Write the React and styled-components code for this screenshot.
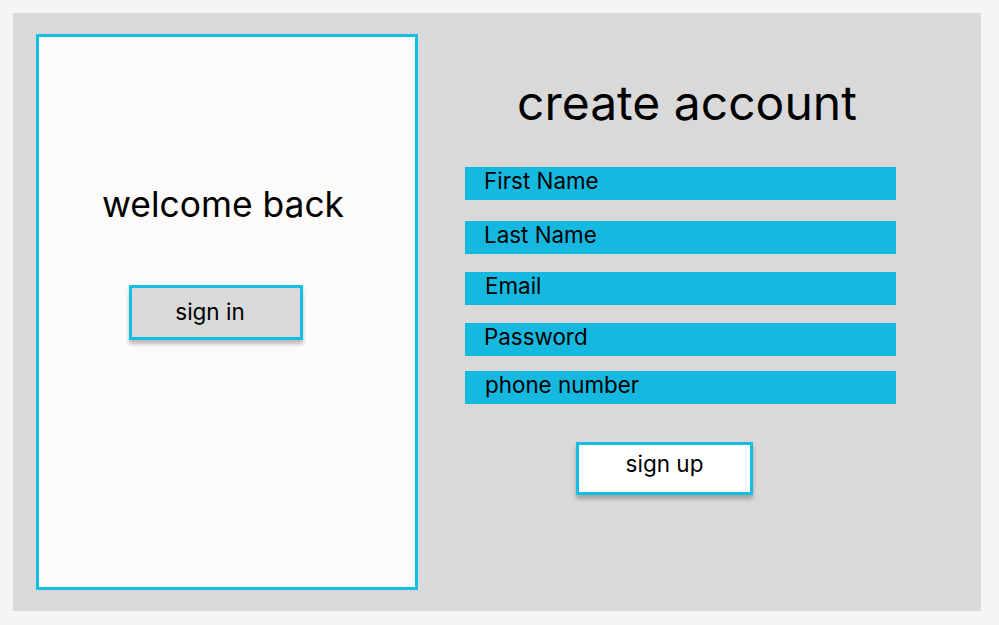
import React from 'react';
import styled, { createGlobalStyle } from 'styled-components';

const GlobalStyle = createGlobalStyle`
  body {
    margin: 0;
    background: #f5f5f5;
    font-family: Inter, "Noto Sans", sans-serif;
  }
`;

const Page = styled.div`
  padding: 13px;
`;

const Frame = styled.div`
  width: 968px;
  height: 598px;
  background: #d9d9d9;
  display: flex;
  box-sizing: border-box;
  padding: 21px 0 0 23px;
`;

const WelcomeCard = styled.div`
  width: 382px;
  height: 556px;
  box-sizing: border-box;
  border: 3px solid #12bfe2;
  background: #fcfbf9;
  display: flex;
  flex-direction: column;
  align-items: center;
`;

const WelcomeTitle = styled.h2`
  margin: 146px 8px 0 0;
  font-size: 35.4px;
  font-weight: 400;
  line-height: normal;
  color: #000;
`;

const Button = styled.button`
  width: ${(p) => p.w}px;
  height: ${(p) => p.h}px;
  box-sizing: border-box;
  border: 3px solid #12bfe2;
  background: ${(p) => p.bg};
  box-shadow: 0 4px 4px rgba(0, 0, 0, 0.25);
  font-family: Inter, "Noto Sans", sans-serif;
  font-size: 22.5px;
  color: #000;
  padding: 0 ${(p) => p.pr || 0}px ${(p) => p.pb || 0}px 0;
  cursor: pointer;
`;

const SignInButton = styled(Button)`
  margin: 59px 0 0 -22px;
`;

const SignUp = styled.div`
  flex: 1;
  display: flex;
  flex-direction: column;
  padding: 39px 0 0 47px;
`;

const Title = styled.h1`
  margin: 0 0 0 52px;
  font-size: 48px;
  font-weight: 400;
  line-height: normal;
  color: #000;
`;

const Fields = styled.div`
  margin-top: 35px;
  display: flex;
  flex-direction: column;
`;

const Field = styled.div`
  width: 431px;
  height: 33px;
  box-sizing: border-box;
  margin-top: ${(p) => p.gap}px;
  padding: 1px 0 0 ${(p) => p.indent}px;
  background: #15b9e0;
  font-size: 22.4px;
  line-height: 25px;
  color: #000;
`;

const SignUpButton = styled(Button)`
  margin: 38px 0 0 111px;
`;

const fields = [
  { label: 'First Name', gap: 0, indent: 19 },
  { label: 'Last Name', gap: 21, indent: 19 },
  { label: 'Email', gap: 18, indent: 20 },
  { label: 'Password', gap: 18, indent: 19 },
  { label: 'phone number', gap: 15, indent: 20 },
];

export default function App() {
  return (
    <>
      <GlobalStyle />
      <Page>
        <Frame>
          <WelcomeCard>
            <WelcomeTitle>welcome back</WelcomeTitle>
            <SignInButton w={174} h={55} bg="#d9d9d9" pb={2} pr={12}>sign in</SignInButton>
          </WelcomeCard>
          <SignUp>
            <Title>create account</Title>
            <Fields>
              {fields.map((f) => (
                <Field key={f.label} gap={f.gap} indent={f.indent}>{f.label}</Field>
              ))}
            </Fields>
            <SignUpButton w={177} h={53} bg="#ffffff" pb={10}>sign up</SignUpButton>
          </SignUp>
        </Frame>
      </Page>
    </>
  );
}
